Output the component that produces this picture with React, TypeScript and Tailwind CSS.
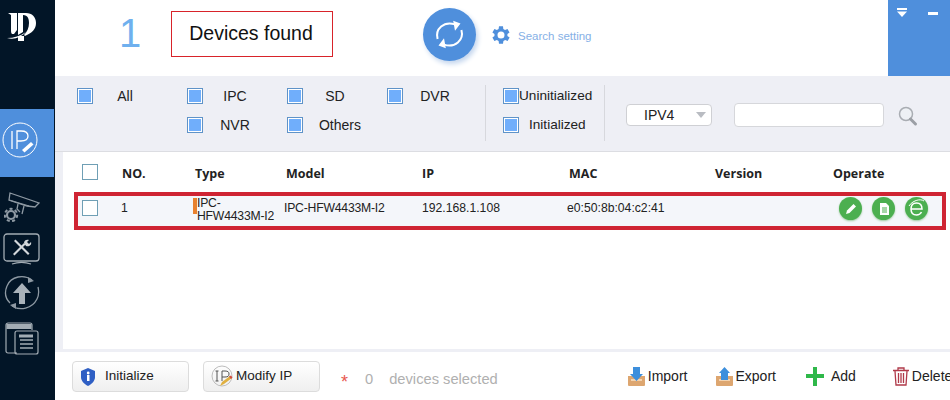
import React from "react";

const font = { fontFamily: '"Liberation Sans", Arial, sans-serif' };

const Box = ({ white }: { white?: boolean }) => (
  <span
    className={
      white
        ? "block w-4 h-4 shrink-0 border border-[#6f9fb5] bg-white"
        : "block w-4 h-4 shrink-0 border border-[#5f93c8] bg-[#70aefb] outline-1 outline-white -outline-offset-2"
    }
  />
);

const Filter = ({ label, shift }: { label: string; shift?: string }) => (
  <div className="flex items-center w-[100px] h-5">
    <Box />
    <span className={`w-16 text-center text-[14px] leading-5 text-[#222] whitespace-nowrap ${shift ?? ""}`}>{label}</span>
  </div>
);

const Logo = () => (
  <svg width="30" height="30" viewBox="0 0 30 30" className="ml-[7px] mt-[13px]">
    <path d="M1 0h9v17l-3 4H5c-1-1-1-2-1-5V2z" fill="#fff" />
    <path d="M11 0h8c6 0 10 4 10 10 0 6-4 10-11 13l-1-1c3-3 5-7 5-12 0-4-1-8-6-8v17l-5 3z" fill="#fff" />
    <path d="M0 25c7 0 13-2 19-6-5 5-11 8-19 6z" fill="#fff" />
    <rect x="11" y="23" width="6" height="5" fill="#fff" />
  </svg>
);

const IpIcon = () => (
  <svg width="38" height="38" viewBox="0 0 38 38" fill="none" stroke="#fff" className="ml-[1px] mt-[12px]">
    <circle cx="19" cy="19" r="17" strokeWidth="1" />
    <path d="M11 10v18M16 28V10h4c5 0 7 2 7 5s-2 5-7 5h-4" strokeWidth="1.3" />
    <path d="M21 29l9-8 2.500 2.500-9 8z" fill="#fff" stroke="none" />
  </svg>
);

const CameraIcon = () => (
  <svg width="40" height="32" viewBox="0 0 40 32" fill="none" stroke="#8e99a3" strokeWidth="1.300" className="ml-[4px] mt-[14px]">
    <path d="M6 2l29 10-4 4-8-1L5 9z" />
    <path d="M5 9l20 6M14 13l-1 5 3 3M20 15l-2 8" />
    <circle cx="7" cy="24" r="4" strokeWidth="2.200" />
    <circle cx="7" cy="24" r="6.200" strokeWidth="2" strokeDasharray="3 2.400" />
  </svg>
);

const ToolsIcon = () => (
  <svg width="38" height="33" viewBox="0 0 38 33" fill="none" className="ml-[3px] mt-[10px]">
    <rect x="1" y="1" width="35" height="27" rx="3" stroke="#a3acb4" strokeWidth="1.300" />
    <path d="M9 31c6-2 13-2 19 0" stroke="#a3acb4" strokeWidth="1.300" />
    <path d="M11 8l14 14 1.500-1.500L12.500 6.500z" fill="#d4d8dc" />
    <path d="M10 21L21 10l1.500 1.500-11 11z" fill="#d4d8dc" />
    <path d="M21 10c0-3 3-4 5-3l-2 2 2 2 2-2c1 3-2 5-5 4z" fill="#d4d8dc" />
  </svg>
);

const UploadIcon = () => (
  <svg width="36" height="36" viewBox="0 0 36 36" fill="none" className="ml-[4px] mt-[9px]">
    <path d="M28 5C20-1 7 1 3 11c-3 7-1 13 3 17" stroke="#8e99a3" strokeWidth="1.300" />
    <path d="M8 31c8 5 20 3 25-7 2-4 2-8 1-12" stroke="#8e99a3" strokeWidth="1.300" />
    <path d="M24 2l6 4-6 2zM12 34l-6-4 6-2z" fill="#8e99a3" />
    <path d="M18 8l9 10h-6v11h-6V18H9z" fill="#a9b2ba" />
  </svg>
);

const WindowsIcon = () => (
  <svg width="34" height="34" viewBox="0 0 34 34" fill="none" stroke="#a3acb4" strokeWidth="1.200" className="ml-[5px] mt-[11px]">
    <path d="M12 31H3a2 2 0 0 1-2-2V3a2 2 0 0 1 2-2h22a2 2 0 0 1 2 2v5" />
    <path d="M1.500 2h25v5h-25z" fill="#a3acb4" stroke="none" />
    <rect x="10" y="9" width="23" height="23" rx="2" />
    <path d="M15 18h13M15 22h13M15 26h13" strokeWidth="1.300" />
    <rect x="14" y="12.500" width="14" height="3" fill="#a3acb4" stroke="none" />
  </svg>
);

const Sidebar = () => (
  <div className="w-[55px] h-full shrink-0 bg-[#021527] flex flex-col">
    <div className="h-[109px]">
      <Logo />
    </div>
    <div className="h-[68px] w-[54px] bg-[#4f8fdc] shrink-0 flex">
      <IpIcon />
    </div>
    <CameraIcon />
    <ToolsIcon />
    <UploadIcon />
    <WindowsIcon />
  </div>
);

const Header = () => (
  <div className="h-[76px] bg-white flex items-start">
    <span className="ml-[64px] mt-[11px] w-[52px] text-[40px] leading-[44px] font-light text-[#6fb0ee]">1</span>
    <div className="mt-[11px] w-[162px] h-[46px] border border-[#d8232a] pr-[2px] flex items-center justify-center text-[19.5px] text-[#111]">
      Devices found
    </div>
    <div className="ml-[90px] mt-[8px] w-[53px] h-[53px] rounded-full bg-[#4f8fdc] shadow-[2px_3px_5px_#c4d6ee] flex items-center justify-center">
      <svg width="33" height="33" viewBox="0 0 36 36" fill="none" stroke="#fff" strokeWidth="2.200">
        <path d="M5 23C2 12 12 3 24 7" />
        <path d="M31 13c3 11-7 20-19 16" />
        <path d="M22 3l8 3-6 8zM14 33l-8-3 6-8z" fill="#fff" stroke="none" />
      </svg>
    </div>
    <svg width="24" height="24" viewBox="0 0 24 24" fill="#4f8fdc" className="ml-[12px] mt-[23px]">
      <path d="M19.400 13a7.600 7.600 0 0 0 0-2l2.100-1.600-2-3.500-2.500 1a7.600 7.600 0 0 0-1.700-1L15 3.300h-4l-.4 2.600a7.600 7.600 0 0 0-1.700 1l-2.500-1-2 3.500L6.500 11a7.600 7.600 0 0 0 0 2l-2.100 1.600 2 3.500 2.500-1c.5.400 1.100.7 1.700 1l.4 2.600h4l.4-2.600c.6-.3 1.200-.6 1.700-1l2.500 1 2-3.500zM13 15.500a3.500 3.500 0 1 1 0-7 3.500 3.500 0 0 1 0 7z" />
    </svg>
    <span className="ml-[6px] mt-[28px] text-[11.5px] leading-[16px] text-[#86b0e6]">Search setting</span>
    <div className="ml-auto w-[62px] h-[76px] bg-[#4f8fdc] flex items-start gap-[20px] pl-[8px] pt-[8px]">
      <svg width="12" height="10" viewBox="0 0 12 10" fill="#fff">
        <rect x="1" y="0" width="10" height="2" />
        <path d="M1 3.500h10L6 9z" />
      </svg>
      <span className="block w-[10px] h-[3px] mt-[4px] bg-white" />
    </div>
  </div>
);

const Filters = () => (
  <div className="h-[76px] shrink-0 flex items-start pl-[22px] border-b border-[#dcdde2]">
    <div className="w-[110px] shrink-0 pt-[10px]">
      <Filter label="All" />
    </div>
    <div className="w-[298px] shrink-0 pt-[10px] flex flex-wrap gap-y-[9px]">
      <Filter label="IPC" />
      <Filter label="SD" />
      <div className="w-[98px] overflow-visible">
        <Filter label="DVR" />
      </div>
      <Filter label="NVR" />
      <Filter label="Others" shift="pl-[10px]" />
    </div>
    <div className="w-[120px] h-[56px] mt-[9px] border-x border-[#d7d8dd] pl-[17px] pt-[1px] flex flex-col gap-[9px] shrink-0">
      <div className="flex items-center h-5">
        <Box />
        <span className="text-[13.6px] leading-5 text-[#222]">Uninitialized</span>
      </div>
      <div className="flex items-center h-5">
        <Box />
        <span className="ml-[10px] text-[13.6px] leading-5 text-[#222]">Initialized</span>
      </div>
    </div>
    <div className="ml-[21px] mt-[28px] w-[86px] h-[22px] bg-white border border-[#cfd0d4] rounded-[4px] flex items-center pl-[17px] pr-[5px] text-[14px] text-[#222]">
      IPV4
      <span className="ml-auto w-0 h-0 border-x-[5px] border-x-transparent border-t-[6px] border-t-[#b9bcc2]" />
    </div>
    <div className="ml-[22px] mt-[27px] w-[150px] h-[24px] bg-white border border-[#d6d7db] rounded-[4px]" />
    <svg width="22" height="22" viewBox="0 0 22 22" fill="none" className="ml-[13px] mt-[29px]">
      <circle cx="9" cy="9" r="6.500" fill="#eef1f5" stroke="#a9adb3" strokeWidth="1.500" />
      <path d="M13.500 14l5 5" stroke="#9b9fa5" strokeWidth="3" strokeLinecap="round" />
    </svg>
  </div>
);

const headers = ["NO.", "Type", "Model", "IP", "MAC", "Version", "Operate"];

const GreenIcon = ({ children }: { children: React.ReactNode }) => (
  <span className="w-[23px] h-[23px] rounded-full bg-[#4caf50] shadow-[0_1px_2px_#9fcba1] flex items-center justify-center">
    {children}
  </span>
);

const Table = () => (
  <div className="h-[197px] shrink-0 ml-[8px] bg-white flex flex-col">
    <div className="h-[40px] pl-[19px] shrink-0 grid grid-cols-[40px_73px_91px_136px_147px_146px_118px_1fr] items-center">
      <Box white />
      {headers.map((h) => (
        <span key={h} className="mt-[3px] text-[12.5px] leading-4 font-bold text-[#222] whitespace-nowrap" style={{ fontFamily: '"Open Sans", sans-serif' }}>
          {h}
        </span>
      ))}
    </div>
    <div className="ml-[11px] mr-[4px] h-[38px] shrink-0 border-[4px] border-[#cf2433] bg-[#f4f6fa] pl-[4px] pb-[6px] grid grid-cols-[39px_72px_91px_138px_145px_146px_125px_1fr] items-center text-[12.2px] text-[#222]">
      <Box white />
      <span>1</span>
      <div className="flex items-start h-[22px]">
        <span className="block w-[4px] h-[16px] mt-[1px] bg-[#e8812f] shrink-0" />
        <span className="leading-[13px] -tracking-[0.2px] whitespace-nowrap">
          IPC-
          <br />
          HFW4433M-I2
        </span>
      </div>
      <span className="whitespace-nowrap -tracking-[0.2px]">IPC-HFW4433M-I2</span>
      <span>192.168.1.108</span>
      <span>e0:50:8b:04:c2:41</span>
      <span />
      <div className="flex gap-[10px] pl-[1px] h-[22px]">
        <GreenIcon>
          <svg width="14" height="14" viewBox="0 0 14 14" fill="#fff">
            <path d="M2 12l1-3.500 6.500-6.500 2.500 2.500L5.500 11z" />
          </svg>
        </GreenIcon>
        <GreenIcon>
          <svg width="14" height="14" viewBox="0 0 14 14">
            <path d="M3 1h6l3 3v9H3z" fill="#fff" />
            <path d="M5 6h5M5 8h5M5 10h5" stroke="#4caf50" />
          </svg>
        </GreenIcon>
        <GreenIcon>
          <svg width="21" height="21" viewBox="0 0 21 21" fill="none" stroke="#fff" strokeWidth="1.500">
            <path d="M5 11h11c0-4-2-6-5.500-6S5 7 5 11s2.500 6 5.500 6c2.500 0 4-1 5-3" />
            <path d="M3 8c3-5 11-8 15-5" strokeWidth="1" />
          </svg>
        </GreenIcon>
      </div>
    </div>
  </div>
);

const Button = ({ icon, label, gap }: { icon: React.ReactNode; label: string; gap: string }) => (
  <div className={`w-[117px] h-[31px] shrink-0 rounded-[4px] border border-[#dcdcdc] bg-gradient-to-b from-white to-[#efefef] flex items-center pl-[7px] text-[13.5px] text-[#222] ${gap}`}>
    {icon}
    {label}
  </div>
);

const TrayIcon = ({ up }: { up?: boolean }) => (
  <svg width="17" height="19" viewBox="0 0 17 19">
    <path d="M0 9h17v9a1 1 0 0 1-1 1H1a1 1 0 0 1-1-1z" fill="#dda670" />
    <path d="M3 12h11v2H3z" fill="#f4d3ae" />
    {up ? (
      <path d="M8.500 0L14 6h-2v7H5V6H3z" fill="#3d8fdc" />
    ) : (
      <path d="M5 0h7v7h3l-6.500 7L2 7h3z" fill="#3d8fdc" />
    )}
  </svg>
);

const Footer = () => (
  <div className="h-[48px] shrink-0 bg-white flex items-center pl-[17px] pt-[1px] whitespace-nowrap overflow-hidden">
    <Button
      label="Initialize"
      gap="gap-[9px]"
      icon={
        <svg width="16" height="18" viewBox="0 0 16 18">
          <path d="M8 0l7 3v6c0 4-3 7-7 9-4-2-7-5-7-9V3z" fill="#2f5fc4" />
          <rect x="7" y="7" width="2.500" height="6" fill="#fff" />
          <circle cx="8.200" cy="5" r="1.400" fill="#fff" />
        </svg>
      }
    />
    <div className="w-[14px] shrink-0" />
    <Button
      label="Modify IP"
      gap="gap-[2px]"
      icon={
        <svg width="23" height="23" viewBox="0 0 23 23" fill="none">
          <circle cx="11" cy="11" r="10" stroke="#bdbdbd" />
          <path d="M6 6v10M4.500 6h3M4.500 16h3M11 16V6h3c3 0 4 1 4 3s-1 3-4 3h-3" stroke="#555" />
          <path d="M9 21l2-4 8-6 2 2-8 6z" fill="#e0b040" />
          <path d="M18 11.500l2-1 1.500 2-1.500 1.500z" fill="#d24b3e" />
        </svg>
      }
    />
    <span className="ml-[21px] text-[18px] leading-[18px] mt-[10px] text-[#e8584f]">*</span>
    <span className="ml-[17px] mt-[6px] text-[14.7px] text-[#b0b0b0]">0</span>
    <span className="ml-[16px] mt-[6px] text-[14.7px] text-[#b0b0b0]">devices selected</span>
    <div className="ml-[130px] flex items-center gap-[3px] text-[14px] text-[#222]">
      <TrayIcon />
      Import
    </div>
    <div className="ml-[29px] flex items-center gap-[2px] text-[14px] text-[#222]">
      <TrayIcon up />
      Export
    </div>
    <div className="ml-[30px] flex items-center gap-[7px] text-[14px] text-[#222]">
      <svg width="18" height="19" viewBox="0 0 18 19" fill="#2fb84a">
        <path d="M7 0h4v7h7v4h-7v8H7v-8H0V7h7z" />
      </svg>
      Add
    </div>
    <div className="ml-[37px] flex items-center gap-[3px] text-[14px] text-[#222]">
      <svg width="16" height="19" viewBox="0 0 16 19" fill="none" stroke="#b03a4a" strokeWidth="1.300">
        <path d="M0 3.500h16M5 3V1h6v2M2 4l1 14h10l1-14M5.500 6v10M8 6v10M10.500 6v10" />
      </svg>
      Delete
    </div>
  </div>
);

export default function App() {
  return (
    <div className="w-[950px] h-[400px] flex overflow-hidden bg-[#eeeff5]" style={font}>
      <Sidebar />
      <div className="flex-1 min-w-0 flex flex-col">
        <Header />
        <Filters />
        <Table />
        <div className="h-[3px] shrink-0" />
        <Footer />
      </div>
    </div>
  );
}
